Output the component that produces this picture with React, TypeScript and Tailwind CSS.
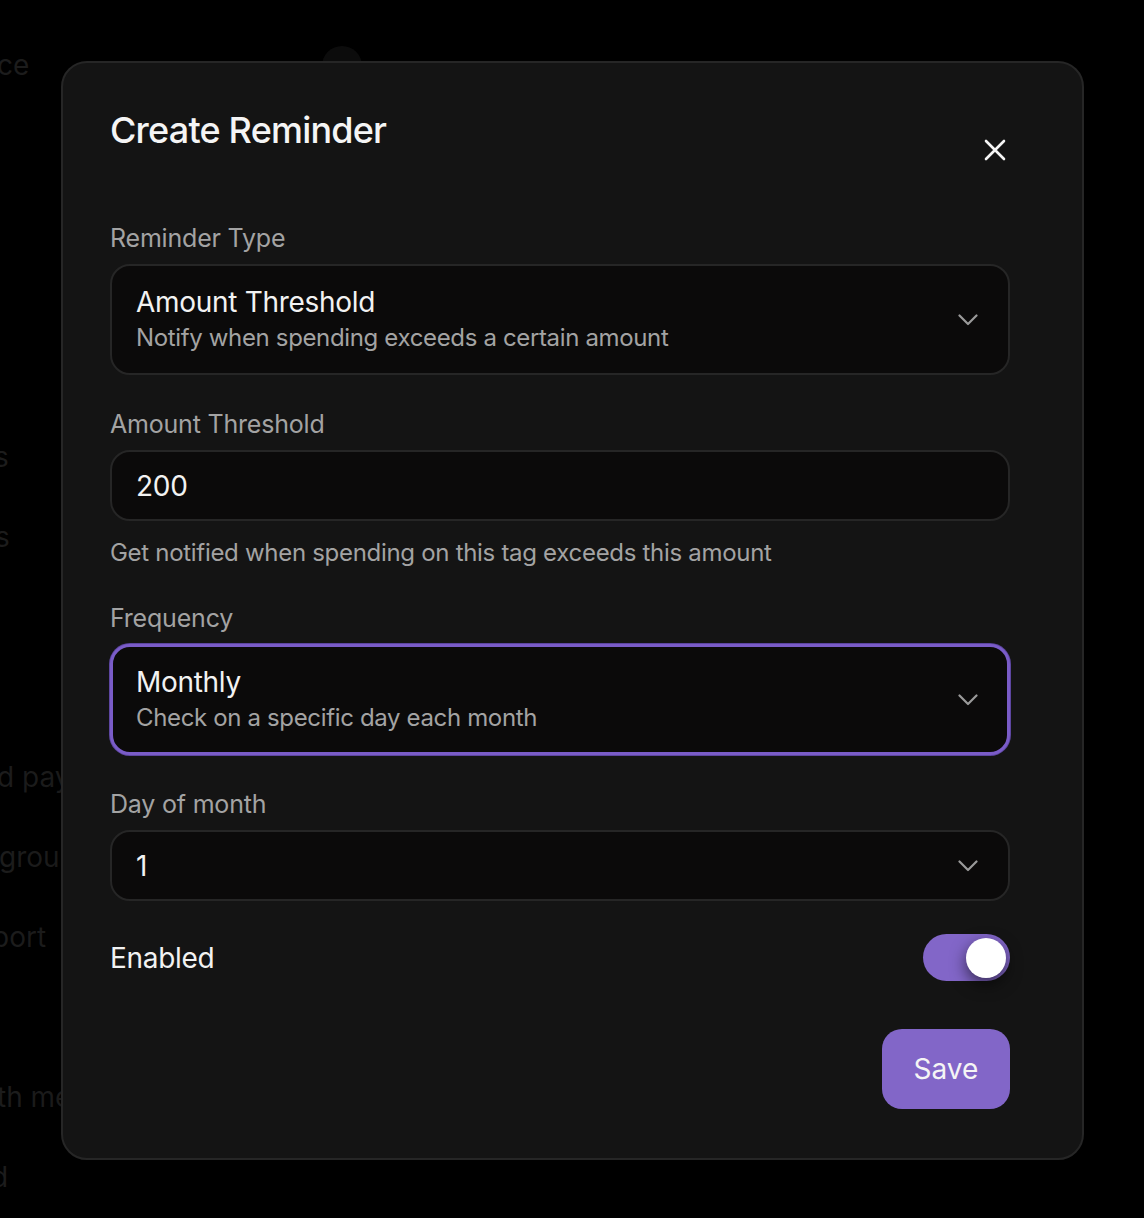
const FONT = { fontFamily: 'Inter, "Noto Sans", sans-serif' };

const BG_ITEMS: { text: string; shift: string; gap: string }[] = [
  { text: 'ce', shift: '-ml-[3px]', gap: 'mt-[47px]' },
  { text: 's', shift: '-ml-[6px]', gap: 'mt-[356px]' },
  { text: 's', shift: '-ml-[5px]', gap: 'mt-[44px]' },
  { text: 'd payments', shift: '-ml-[3px]', gap: 'mt-[204px]' },
  { text: 'groups', shift: '-ml-[1px]', gap: 'mt-[44px]' },
  { text: 'port', shift: '-ml-[8px]', gap: 'mt-[44px]' },
  { text: 'th messages', shift: '-ml-[3px]', gap: 'mt-[124px]' },
  { text: 'd', shift: '-ml-[9px]', gap: 'mt-[44px]' },
];

function Chevron() {
  return (
    <svg width="20" height="12" viewBox="0 0 20 12" fill="none" className="text-[#9a9a9a]">
      <path d="M1.5 1.5 L10 10 L18.5 1.5" stroke="currentColor" strokeWidth="2.2" strokeLinecap="round" strokeLinejoin="round" />
    </svg>
  );
}

function Label({ children }: { children: React.ReactNode }) {
  return <div className="text-[25px] leading-[36px] tracking-[-0.2px] text-[#a3a3a3]">{children}</div>;
}

function SelectBox({
  title,
  subtitle,
  active,
}: {
  title: string;
  subtitle?: string;
  active?: boolean;
}) {
  return (
    <div
      className={
        active
          ? 'flex h-[111px] items-center justify-between rounded-[20px] border-[3px] border-[#7a5cc8] bg-[#0b0a0a] pl-[23px] pr-[29px] ring-1 ring-[#5d46a0]'
          : 'flex items-center justify-between rounded-[20px] border-2 border-[#262626] bg-[#0b0a0a] pl-[24px] pr-[30px] ' +
            (subtitle ? 'h-[111px]' : 'h-[71px]')
      }
    >
      <div className="flex flex-col">
        <span className="text-[28px] leading-[36px] tracking-[-0.3px] text-[#f2f2f2]">{title}</span>
        {subtitle && (
          <span className="text-[24px] leading-[36px] tracking-[-0.35px] text-[#a3a3a3]">{subtitle}</span>
        )}
      </div>
      <Chevron />
    </div>
  );
}

export default function App() {
  return (
    <div className="relative h-[1218px] w-[1144px] overflow-hidden bg-black" style={FONT}>
      {/* dimmed page behind the dialog */}
      <div className="flex flex-col text-[28px] leading-[36px] text-[#1c1c1c]">
        {BG_ITEMS.map((item, i) => (
          <div key={i} className={`${item.gap} ${item.shift} whitespace-nowrap`}>
            {item.text}
          </div>
        ))}
      </div>
      <div className="absolute left-[322px] top-[46px] h-[40px] w-[40px] rounded-full bg-[#0d0d0d]" />

      {/* dialog */}
      <div className="absolute left-[61px] top-[61px] w-[1023px] rounded-[26px] border-2 border-[#262626] bg-[#141414] pb-[49px] pl-[47px] pr-[72px] pt-[42px] shadow-2xl">
        <div className="flex items-start justify-between">
          <h2 className="text-[36px] font-medium leading-[50px] tracking-[-0.8px] text-[#f5f5f5]">Create Reminder</h2>
          <button className="mr-[4px] mt-[34px] text-[#f5f5f5]">
            <svg width="22" height="22" viewBox="0 0 22 22" fill="none">
              <path d="M2 2 L20 20 M20 2 L2 20" stroke="currentColor" strokeWidth="2.6" strokeLinecap="round" />
            </svg>
          </button>
        </div>

        <div className="mt-[59px]">
          <Label>Reminder Type</Label>
          <div className="mt-[8px]">
            <SelectBox title="Amount Threshold" subtitle="Notify when spending exceeds a certain amount" />
          </div>
        </div>

        <div className="mt-[31px]">
          <Label>Amount Threshold</Label>
          <div className="mt-[8px] flex h-[71px] items-center rounded-[20px] border-2 border-[#262626] bg-[#0b0a0a] px-[24px]">
            <span className="text-[28px] leading-[36px] tracking-[-0.3px] text-[#f2f2f2]">200</span>
          </div>
          <div className="mt-[14px] text-[24px] leading-[36px] tracking-[-0.3px] text-[#a3a3a3]">
            Get notified when spending on this tag exceeds this amount
          </div>
        </div>

        <div className="mt-[29px]">
          <Label>Frequency</Label>
          <div className="mt-[8px]">
            <SelectBox title="Monthly" subtitle="Check on a specific day each month" active />
          </div>
        </div>

        <div className="mt-[31px]">
          <Label>Day of month</Label>
          <div className="mt-[8px]">
            <SelectBox title="1" />
          </div>
        </div>

        <div className="mt-[33px] flex items-center justify-between">
          <span className="text-[28px] leading-[36px] tracking-[-0.3px] text-[#f2f2f2]">Enabled</span>
          <div className="flex h-[47px] w-[87px] items-center justify-end rounded-full bg-[#8266c8] pr-[4px]">
            <div className="h-[40px] w-[40px] rounded-full bg-white shadow-[0_6px_16px_rgba(0,0,0,0.6)]" />
          </div>
        </div>

        <div className="mt-[48px] flex justify-end">
          <button className="h-[80px] w-[128px] rounded-[20px] bg-[#8266c8] text-[28px] text-[#f5f5f5]">Save</button>
        </div>
      </div>
    </div>
  );
}
